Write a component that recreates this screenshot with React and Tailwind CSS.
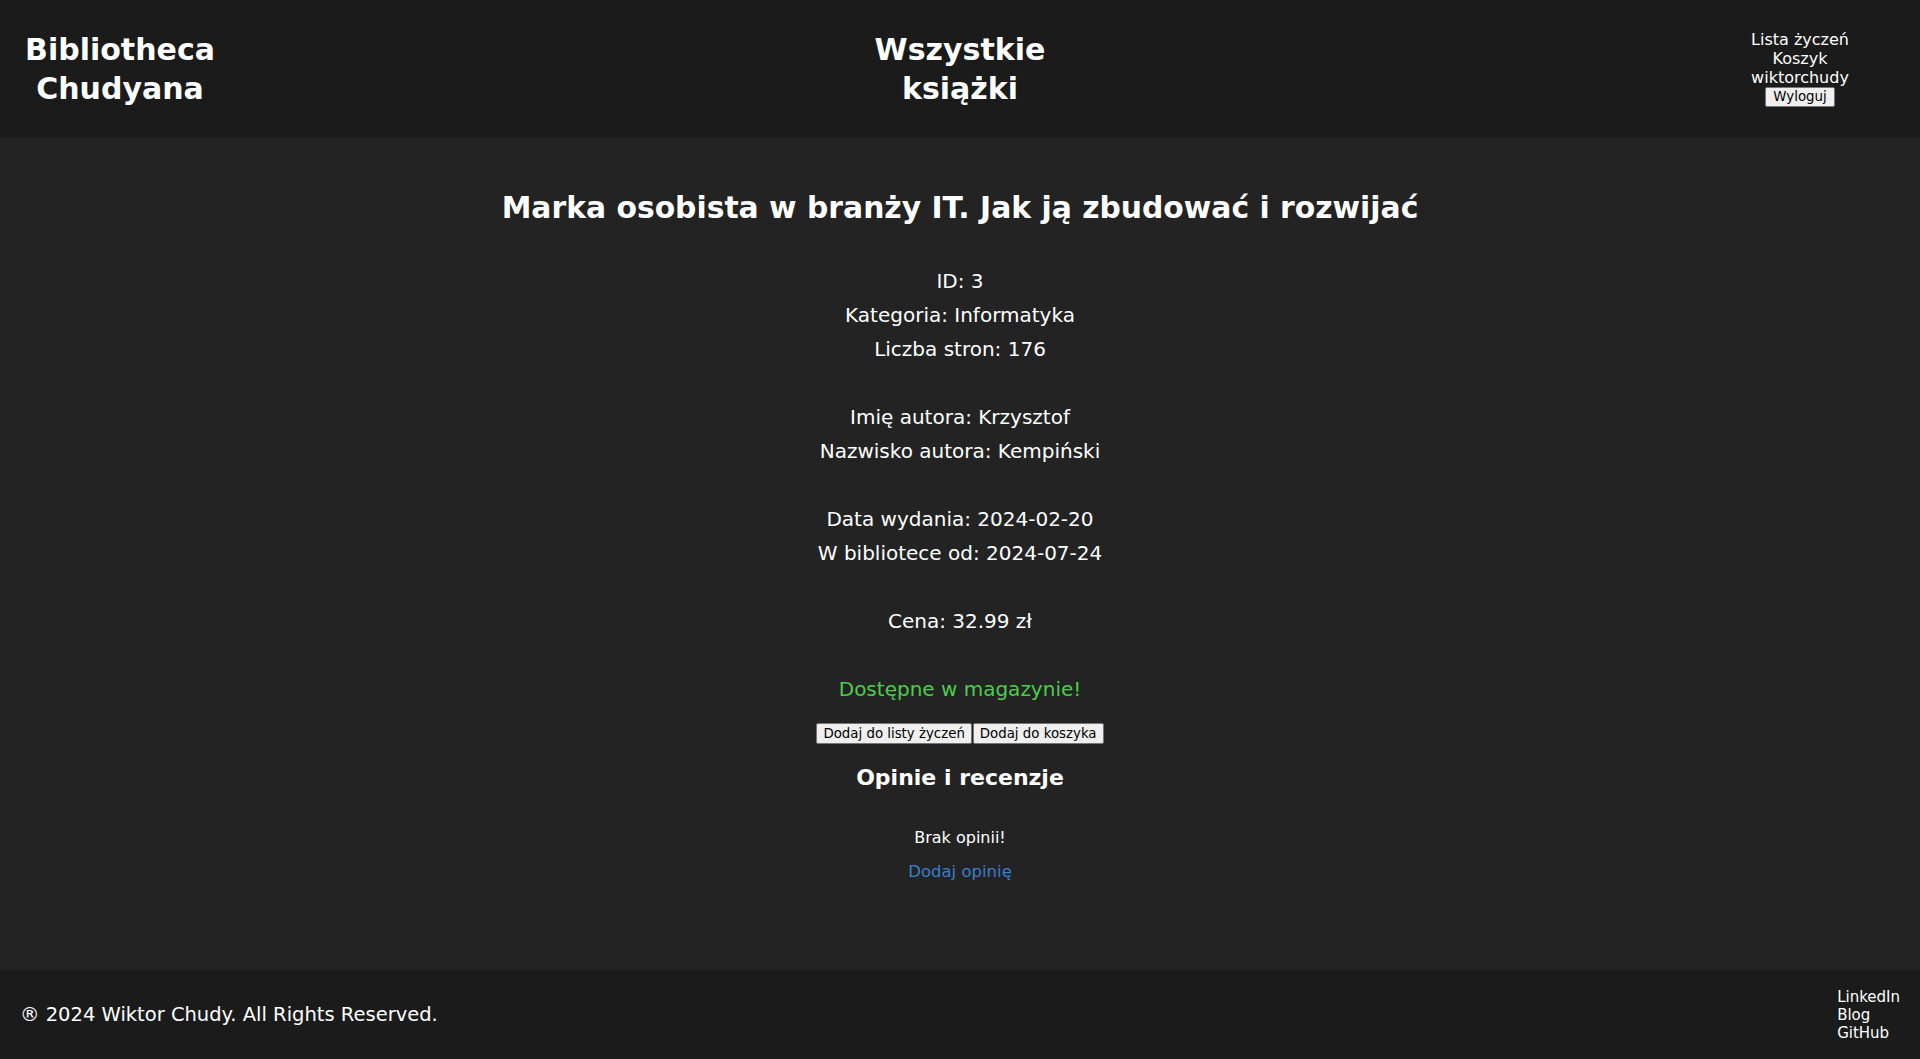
import React from 'react';

const book = {
  id: 3,
  title: 'Marka osobista w branży IT. Jak ją zbudować i rozwijać',
  category: 'Informatyka',
  pages: 176,
  authorName: 'Krzysztof',
  authorSurname: 'Kempiński',
  published: '2024-02-20',
  added: '2024-07-24',
  price: '32.99',
};

const Header = () => (
  <header className="h-[137px] bg-[#1b1b1b] grid grid-cols-3 items-center px-5">
    <h1 className="justify-self-start w-[200px] text-center text-[30px] leading-[39px] font-bold">
      Bibliotheca Chudyana
    </h1>
    <h1 className="justify-self-center w-[200px] text-center text-[30px] leading-[39px] font-bold">
      Wszystkie książki
    </h1>
    <nav className="justify-self-end mr-[50px] w-[100px] flex flex-col items-center text-[16px] leading-[19px]">
      <a href="#">Lista życzeń</a>
      <a href="#">Koszyk</a>
      <span>wiktorchudy</span>
      <button className="h-[20px] px-[7px] bg-[#efefef] text-black border border-[#767676] rounded-[2px] text-[13.33px] leading-[16px]">
        Wyloguj
      </button>
    </nav>
  </header>
);

const BookDetails = () => (
  <main className="flex-1 flex flex-col items-center text-center">
    <h1 className="mt-[54px] text-[29.8px] leading-[34px] font-bold">{book.title}</h1>
    <div className="mt-[39px] text-[20px] leading-[34px]">
      ID: {book.id}<br />
      Kategoria: {book.category}<br />
      Liczba stron: {book.pages}<br />
      <br />
      Imię autora: {book.authorName}<br />
      Nazwisko autora: {book.authorSurname}<br />
      <br />
      Data wydania: {book.published}<br />
      W bibliotece od: {book.added}<br />
      <br />
      Cena: {book.price} zł<br />
      <br />
      <span className="text-[#4ccd4c]">Dostępne w magazynie!</span>
    </div>
    <div className="mt-[17px] flex gap-[1px]">
      <button className="h-[21px] px-[6px] bg-[#efefef] text-black border border-[#767676] rounded-[2px] text-[13.33px] leading-[16px]">
        Dodaj do listy życzeń
      </button>
      <button className="h-[21px] px-[6px] bg-[#efefef] text-black border border-[#767676] rounded-[2px] text-[13.33px] leading-[16px]">
        Dodaj do koszyka
      </button>
    </div>
    <h2 className="mt-[20px] text-[22px] leading-[27px] font-bold">Opinie i recenzje</h2>
    <p className="mt-[37px] text-[16px] leading-[19px]">Brak opinii!</p>
    <a href="#" className="mt-[14px] text-[16.5px] leading-[22px] text-[#3a7fcc]">Dodaj opinię</a>
  </main>
);

const Footer = () => (
  <footer className="h-[89px] bg-[#1b1b1b] flex items-center justify-between px-5">
    <p className="text-[19.5px]">® 2024 Wiktor Chudy. All Rights Reserved.</p>
    <div className="flex flex-col text-[15px] leading-[18px]">
      <a href="#">LinkedIn</a>
      <a href="#">Blog</a>
      <a href="#">GitHub</a>
    </div>
  </footer>
);

export default function App() {
  return (
    <div className="min-h-screen flex flex-col bg-[#232323] text-white font-['DejaVu_Sans',sans-serif]">
      <Header />
      <BookDetails />
      <Footer />
    </div>
  );
}
